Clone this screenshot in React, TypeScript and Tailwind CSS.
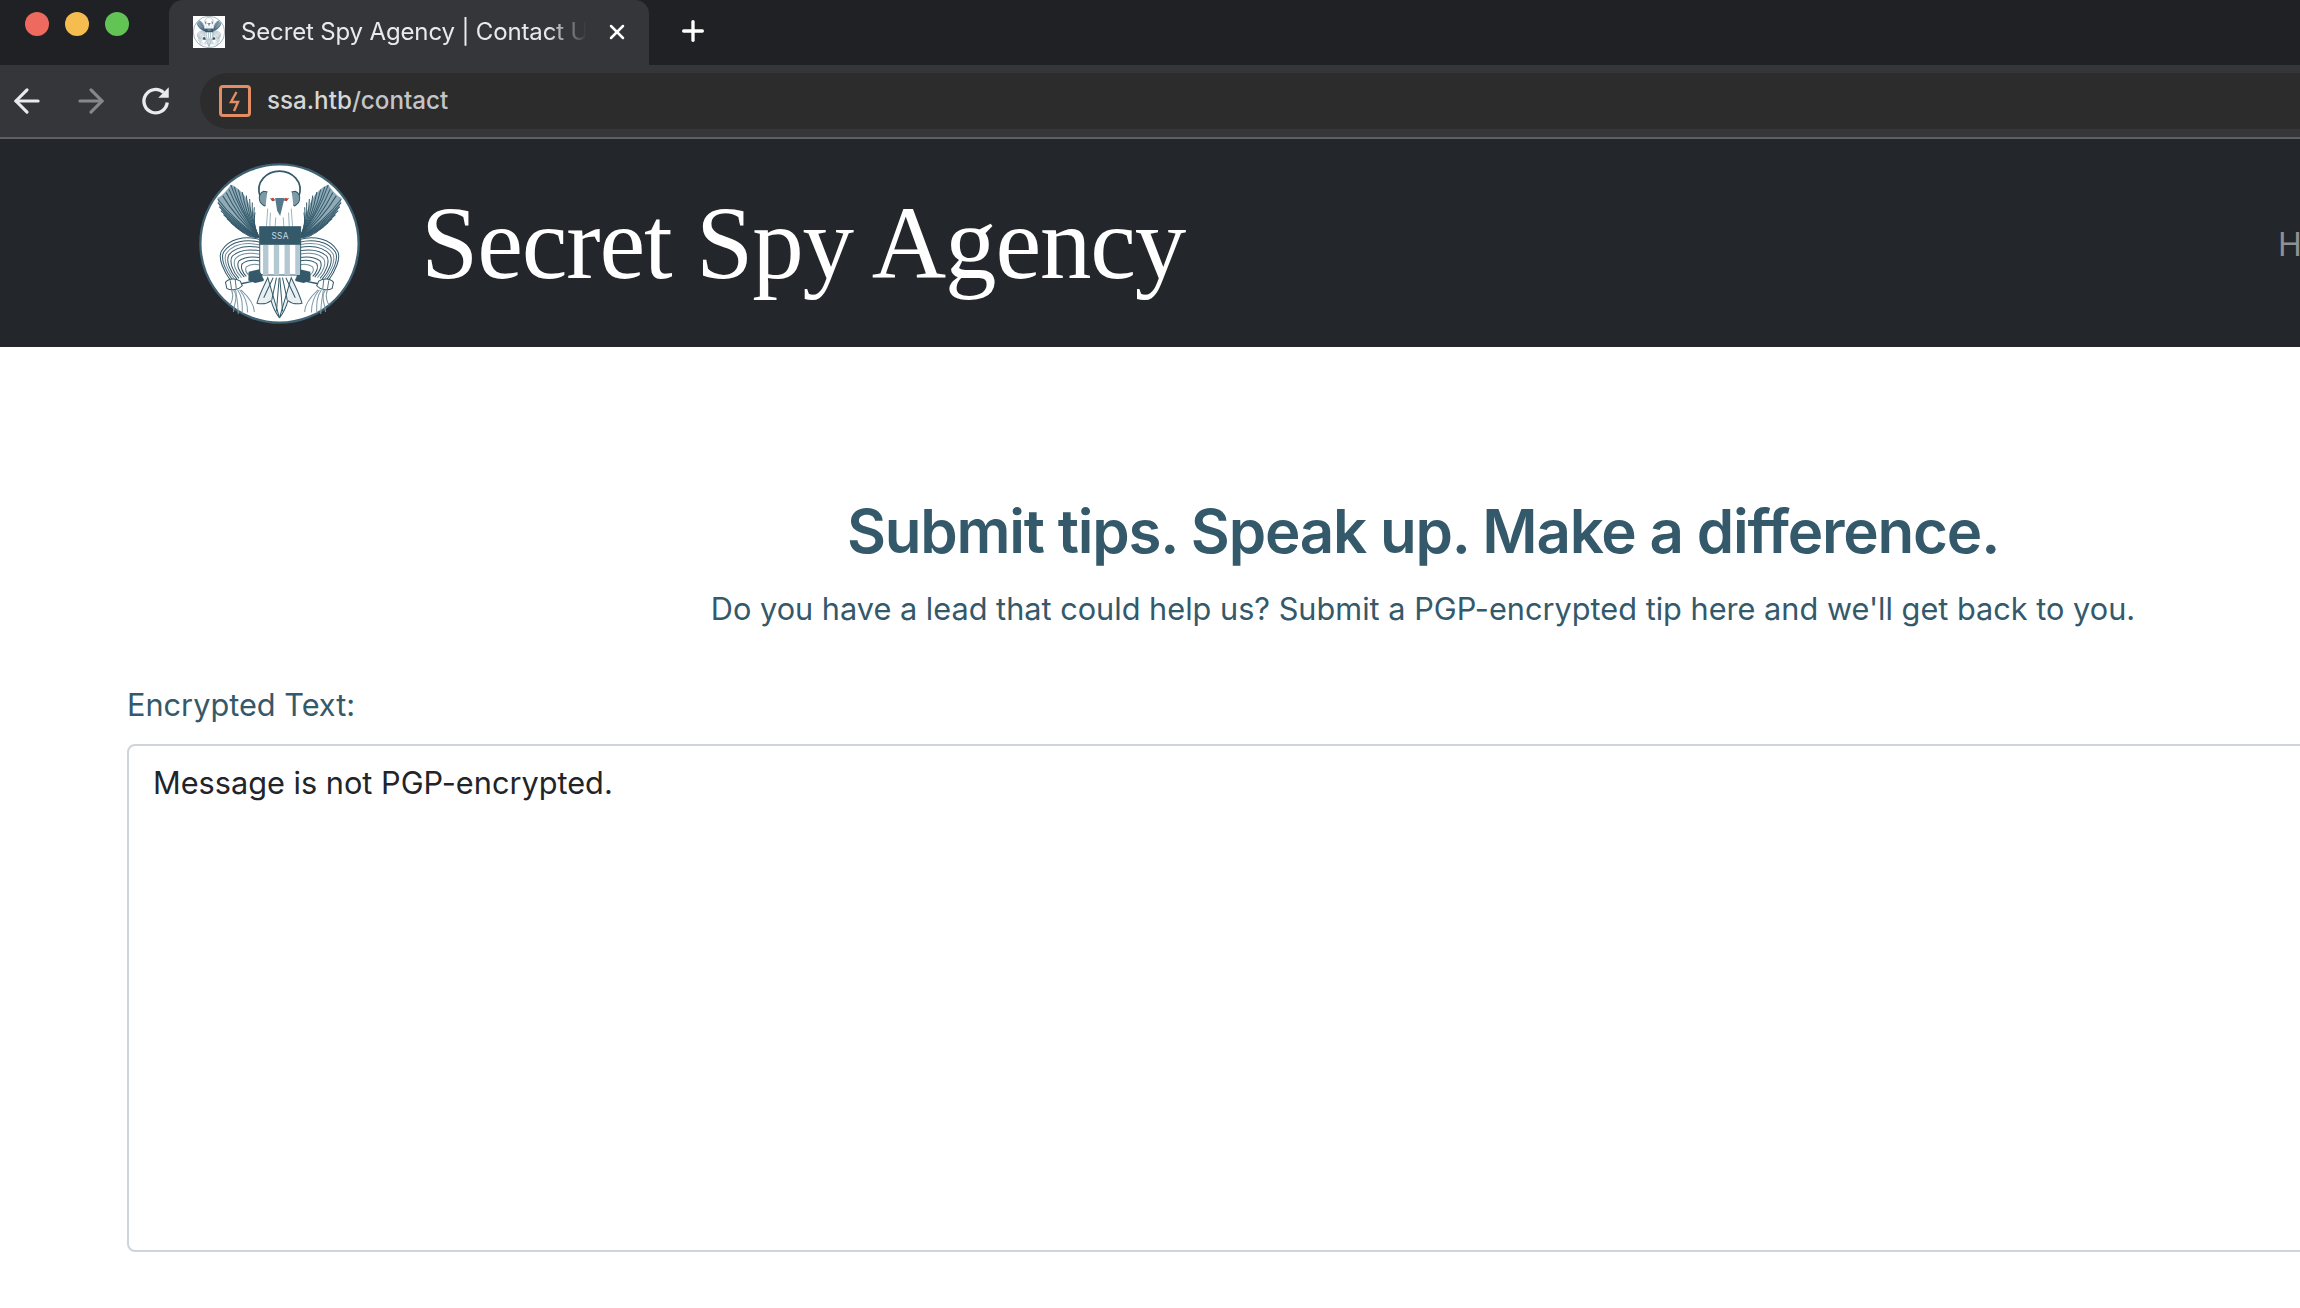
import React from "react";
import { ArrowLeft, ArrowRight, X, Plus } from "lucide-react";

const wingTips = [
  [224, 215], [222, 200], [216, 186], [208, 175], [198, 165], [186, 155], [174, 147], [162, 139], [152, 134],
  [146, 146], [138, 156], [128, 166], [113, 176], [113, 186], [117, 198], [122, 210], [130, 222], [140, 234],
  [152, 246], [166, 258], [182, 270], [200, 280],
];

const traces = [
  "M238 296 C195 284 146 292 124 330 C112 352 132 392 152 420",
  "M238 304 C198 294 152 300 130 334 C120 356 138 392 158 418",
  "M238 312 C200 304 160 308 138 338 C128 358 144 392 164 416",
  "M238 320 C204 314 168 316 146 342 C136 360 150 392 170 414",
  "M238 330 C206 324 176 326 156 346 C146 362 158 392 176 412",
  "M238 340 C208 334 184 336 166 352 C156 366 166 392 184 410",
  "M238 350 C212 346 192 348 176 360 C168 372 176 392 192 408",
  "M238 360 C216 356 200 358 186 368 C180 378 186 394 198 406",
  "M238 372 C222 368 208 370 198 378 C194 386 198 396 206 402",
];

function Half() {
  return (
    <g>
      <path d="M152 132 C192 150 216 190 224 262 L238 292 C190 286 150 254 130 218 C120 202 113 186 112 172 C126 166 138 152 152 132 Z" fill="#8fabb7" />
      {wingTips.map(([x, y], i) => (
        <path key={i} d={`M236 290 Q${(x + 225) / 2 - 8} ${(y + 285) / 2 + 8} ${x} ${y}`} fill="none" stroke="#34596a" strokeWidth="3" />
      ))}
      {traces.map((d, i) => (
        <path key={i} d={d} fill="none" stroke={i % 3 === 2 ? "#6f8f9d" : "#34596a"} strokeWidth="3" />
      ))}
      <path d="M205 392 L240 384 L250 420 L225 426 L204 418 Z" fill="#34596a" />
      <path d="M182 428 L250 414" stroke="#34596a" strokeWidth="4" />
      <path d="M136 424 C146 410 168 412 180 420 L186 434 C176 446 152 450 140 442 Z" fill="#fff" stroke="#34596a" strokeWidth="3" />
      <path d="M150 418 L154 444 M165 416 L168 442" stroke="#34596a" strokeWidth="2.5" />
      {[[154, 164, 150, 490], [160, 176, 160, 512], [166, 170, 174, 518], [172, 188, 186, 516], [178, 198, 202, 514], [182, 208, 222, 512]].map(
        ([x, cx, tx, ty], i) => (
          <path key={i} d={`M${x} 446 C${cx} 470 ${tx} 490 ${tx} ${ty}`} fill="none" stroke="#7d9aa7" strokeWidth="3" />
        ),
      )}
      <path d="M262 410 C248 440 236 462 230 486 C246 490 262 486 272 478 C276 494 284 512 297 530 Z" fill="#eaf0f2" stroke="#34596a" strokeWidth="3" />
      <path d="M278 410 L250 470 M288 410 L274 476 M296 410 L288 510" stroke="#34596a" strokeWidth="3" />
    </g>
  );
}

function Seal({ className }: { className?: string }) {
  return (
    <svg viewBox="57 68 480 480" className={className}>
      <circle cx="297" cy="308" r="236" fill="#fff" stroke="#3f6171" strokeWidth="7" />
      <path d="M240 170 C222 122 262 92 297 92 C332 92 372 122 354 170" fill="none" stroke="#34596a" strokeWidth="5" />
      <path d="M250 152 C232 160 232 186 252 196 L262 190 L260 154 Z" fill="#7d9aa7" stroke="#34596a" strokeWidth="3" />
      <path d="M344 152 C362 160 362 186 342 196 L332 190 L334 154 Z" fill="#7d9aa7" stroke="#34596a" strokeWidth="3" />
      <path d="M260 156 C280 146 314 146 334 156 L342 230 L350 262 H244 L252 230 Z" fill="#fff" />
      <path d="M262 204 L258 258 M270 216 L268 258 M332 204 L336 258 M324 216 L326 258 M286 230 L284 258 M308 230 L310 258" stroke="#8aa5b1" strokeWidth="2.5" />
      <path d="M284 172 H312 L299 226 L290 210 Z" fill="#55798a" />
      <path d="M268 172 L286 178 L276 182 Z M326 172 L308 178 L318 182 Z" fill="#34596a" />
      <circle cx="277" cy="176" r="4.5" fill="#d63f35" />
      <circle cx="316" cy="176" r="4.5" fill="#d63f35" />
      <Half />
      <g transform="translate(594 0) scale(-1 1)">
        <Half />
      </g>
      <path d="M238 258 H360 V390 Q360 402 348 402 H250 Q238 402 238 390 Z" fill="#fff" stroke="#34596a" strokeWidth="3" />
      <path d="M248 312 H264 V402 H248 Z M280 312 H296 V402 H280 Z M312 312 H328 V402 H312 Z M344 312 H358 V402 H344 Z" fill="#b3c8d0" />
      <rect x="238" y="258" width="122" height="54" fill="#34596a" />
      <text x="299" y="295" textAnchor="middle" fontSize="25" letterSpacing="1" fill="#c9d8dd" fontFamily="Inter, sans-serif">SSA</text>
    </svg>
  );
}

export default function App() {
  return (
    <div className="w-[2300px] h-[1308px] overflow-hidden bg-white font-['Inter',sans-serif]">
      {/* tab strip */}
      <div className="flex h-[65px] bg-[#202124]">
        <div className="flex items-center gap-[16px] pl-[25px] pb-[17px] w-[169px] shrink-0">
          <span className="w-[24px] h-[24px] rounded-full bg-[#ee6a5f]" />
          <span className="w-[24px] h-[24px] rounded-full bg-[#f5bd4f]" />
          <span className="w-[24px] h-[24px] rounded-full bg-[#61c454]" />
        </div>
        <div className="flex items-center w-[480px] h-[65px] rounded-t-[14px] bg-[#35363a] pl-[24px] pb-[2px]">
          <div className="w-[32px] h-[32px] bg-white shrink-0">
            <Seal className="w-[32px] h-[32px]" />
          </div>
          <span className="ml-[16px] w-[349px] overflow-hidden whitespace-nowrap text-[24px] tracking-[-0.15px] text-[#e8eaed] [mask-image:linear-gradient(to_right,black_88%,transparent_99%)]">
            Secret Spy Agency | Contact Us
          </span>
          <X className="ml-[15px] w-[24px] h-[24px] text-white" strokeWidth={2.5} />
        </div>
        <div className="flex items-center pl-[28px] pb-[3px]">
          <Plus className="w-[32px] h-[32px] text-white" strokeWidth={2.5} />
        </div>
      </div>
      {/* toolbar */}
      <div className="flex items-center h-[72px] bg-[#35363a] pl-[8px]">
        <ArrowLeft className="w-[38px] h-[38px] text-[#e8eaed]" strokeWidth={2} />
        <ArrowRight className="ml-[26px] w-[38px] h-[38px] text-[#85878b]" strokeWidth={2} />
        <svg viewBox="0 0 24 24" className="ml-[28px] w-[36px] h-[36px]" fill="none">
          <path d="M19.5 13a7.8 7.8 0 1 1-2.4-6.6" stroke="#e8eaed" strokeWidth="2.2" />
          <path d="M20.5 2.8V9.8H13.5Z" fill="#e8eaed" />
        </svg>
        <div className="ml-[26px] flex items-center flex-1 h-[56px] rounded-l-[28px] bg-[#2c2c2c] pl-[19px]">
          <div className="flex items-center justify-center w-[32px] h-[32px] rounded-[4px] border-[3px] border-[#e38d64]">
            <svg viewBox="0 0 24 24" className="w-[24px] h-[24px]" fill="none">
              <path d="M13.5 3 L8 13 H15 L11 22" stroke="#e38d64" strokeWidth="2.4" />
            </svg>
          </div>
          <span className="ml-[16px] text-[24.2px] font-medium text-[#d5d6d8]">
            ssa.htb<span className="text-[#c3c5c8]">/contact</span>
          </span>
        </div>
      </div>
      <div className="h-[2px] bg-[#5f6064]" />
      {/* navbar */}
      <nav className="relative flex items-center h-[208px] bg-[#23262b]">
        <Seal className="ml-[199px] w-[161px] h-[161px] shrink-0" />
        <span className="ml-[61px] font-['Liberation_Serif',serif] text-[103px] tracking-[-1.15px] leading-none text-white">
          Secret Spy Agency
        </span>
        <span className="absolute left-[2278px] top-[82px] text-[32px] text-[#8e9194]">Home</span>
      </nav>
      {/* content */}
      <main className="w-[2592px] ml-[127px] pt-[148px]">
        <h1 className="text-center text-[60px] leading-[72px] font-semibold tracking-[-1.2px] text-[#34596a]">
          Submit tips. Speak up. Make a difference.
        </h1>
        <p className="mt-[18px] text-center text-[30.7px] leading-[48px] text-[#34596a]">
          Do you have a lead that could help us? Submit a PGP-encrypted tip here and we'll get back to you.
        </p>
        <label className="block mt-[48px] text-[30.7px] leading-[48px] text-[#34596a]">Encrypted Text:</label>
        <div className="mt-[15px] h-[508px] rounded-[8px] border-2 border-[#ced4da] px-[24px] pt-[13px] text-[30.7px] leading-[48px] text-[#212529]">
          Message is not PGP-encrypted.
        </div>
      </main>
    </div>
  );
}
